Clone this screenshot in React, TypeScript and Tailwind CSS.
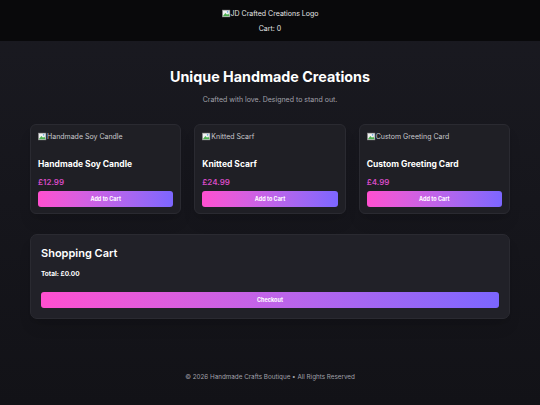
import React from 'react';

const products = [
  { name: 'Handmade Soy Candle', price: '£12.99' },
  { name: 'Knitted Scarf', price: '£24.99' },
  { name: 'Custom Greeting Card', price: '£4.99' },
];

function BrokenImg() {
  return (
    <svg width="9" height="9" viewBox="0 0 16 16" className="inline-block shrink-0">
      <rect x="1" y="2" width="13" height="12" fill="#f2f2f2" stroke="#9a9a9a" strokeWidth="1" />
      <path d="M2 12 L6 7 L9 10 L11 8 L13 11 L13 13 L2 13 Z" fill="#4caf50" />
      <circle cx="10" cy="5" r="1.5" fill="#6aa7d8" />
    </svg>
  );
}

export default function App() {
  return (
    <div
      className="min-h-[405px] w-[540px] bg-gradient-to-b from-[#1a1a21] to-[#121217] text-white flex flex-col"
      style={{ fontFamily: 'Inter, "Noto Sans", sans-serif' }}
    >
      {/* Header */}
      <header className="h-[41px] bg-[#09090b] flex flex-col items-center pt-[8px] gap-[4px] text-[7px] text-[#e5e5e5]">
        <div className="flex items-center leading-[11px]">
          <BrokenImg />
          <span>JD Crafted Creations Logo</span>
        </div>
        <div className="leading-[11px]">Cart: 0</div>
      </header>

      <main className="w-[480px] mx-auto flex flex-col">
        {/* Hero */}
        <section className="pt-[26px] flex flex-col items-center">
          <h1 className="text-[14.3px] font-bold leading-[20px]">Unique Handmade Creations</h1>
          <p className="mt-[8px] text-[7px] text-[#a1a1aa] leading-[10px]">Crafted with love. Designed to stand out.</p>
        </section>

        {/* Products */}
        <section className="mt-[19px] grid grid-cols-3 gap-[13px]">
          {products.map(p => (
            <div key={p.name} className="h-[90px] rounded-[6px] bg-[#1f1f25] border border-[#2a2a31] shadow-lg px-[7px] pt-[6px] flex flex-col">
              <div className="flex items-center text-[7px] text-[#c8c8cc] leading-[11px]">
                <BrokenImg />
                <span>{p.name}</span>
              </div>
              <h3 className="mt-[16px] text-[8.5px] font-bold leading-[12px]">{p.name}</h3>
              <p className="mt-[7px] text-[8px] font-semibold text-[#d64ac4] leading-[10px]">{p.price}</p>
              <button className="mt-[4px] h-[16px] rounded-[3px] bg-gradient-to-r from-[#ff4fd0] to-[#7c66ff] text-[5.5px] font-bold text-white">
                Add to Cart
              </button>
            </div>
          ))}
        </section>

        {/* Cart */}
        <section className="mt-[20px] h-[85px] rounded-[7px] bg-[#212128] border border-[#2a2a31] shadow-lg px-[10px] pt-[10px] flex flex-col">
          <h2 className="text-[11px] font-semibold leading-[16px]">Shopping Cart</h2>
          <p className="mt-[8px] text-[6.5px] font-bold leading-[10px]">Total: £0.00</p>
          <button className="mt-[13px] h-[16px] rounded-[3px] bg-gradient-to-r from-[#ff4fd0] to-[#7c66ff] text-[5.5px] font-bold text-white">
            Checkout
          </button>
        </section>
      </main>

      {/* Footer */}
      <footer className="mt-[53px] text-center text-[6.3px] text-[#a1a1aa] leading-[10px]">
        © 2026 Handmade Crafts Boutique • All Rights Reserved
      </footer>
    </div>
  );
}
